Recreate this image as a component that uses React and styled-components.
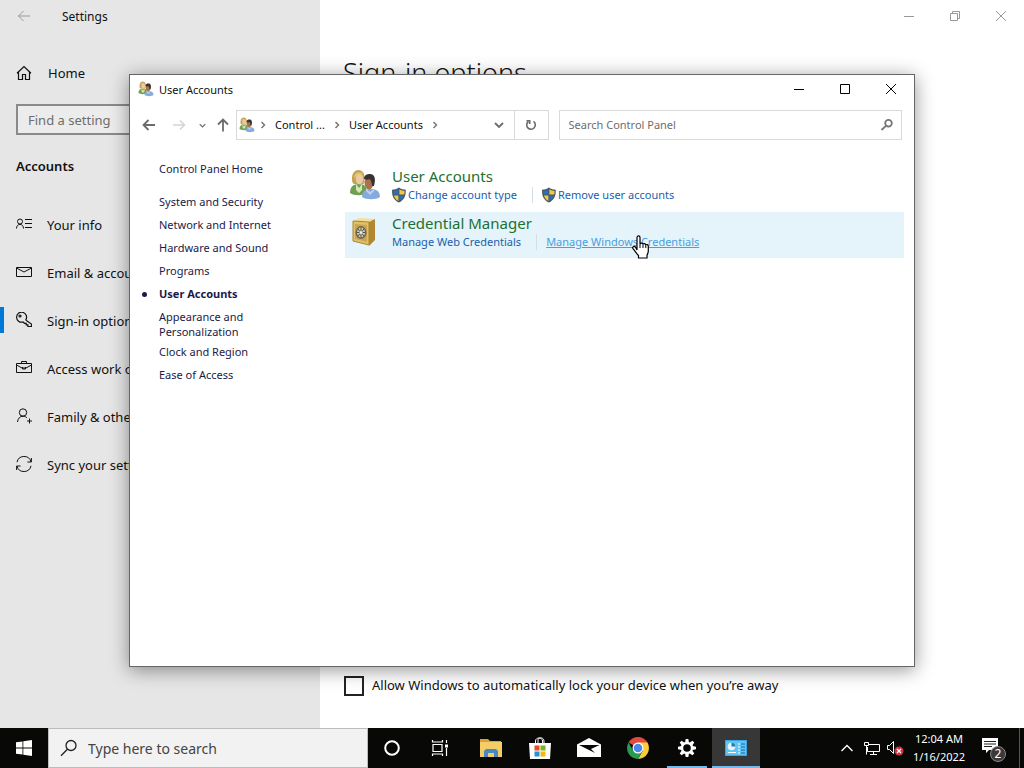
import React from "react";
import styled, { createGlobalStyle, css } from "styled-components";

const GlobalStyle = createGlobalStyle`
  *, *::before, *::after { box-sizing: border-box; }
  body {
    margin: 0;
    font-family: "Noto Sans", "Open Sans", sans-serif;
    font-size: 13px;
    color: #111;
    background: #fff;
  }
  button, input { font: inherit; color: inherit; }
  button { border: 0; padding: 0; background: none; }
  ul { list-style: none; margin: 0; padding: 0; }
  h1, h2, h3 { margin: 0; }
  a { text-decoration: none; color: inherit; }
  svg { display: block; flex: none; }
`;

const Screen = styled.div`
  min-height: 100vh;
  display: grid;
  grid-template-rows: 1fr auto;
`;

const Desktop = styled.div`
  position: relative;
  display: flex;
`;

/* Settings window */

const SettingsWindow = styled.section`
  flex: 1;
  display: flex;
  min-width: 0;
`;

const SettingsSidebar = styled.aside`
  width: 320px;
  flex: none;
  background: #e6e6e6;
`;

const SettingsTitle = styled.header`
  display: flex;
  align-items: center;
  height: 32px;
  font-size: 12px;
`;

const BackButton = styled.button`
  width: 48px;
  height: 32px;
  margin-right: 14px;
  display: grid;
  place-items: center;
  color: #9a9a9a;
`;

const HomeLink = styled.a`
  display: flex;
  align-items: center;
  gap: 16px;
  height: 48px;
  margin-top: 17px;
  padding-left: 16px;
`;

const SettingSearch = styled.input`
  display: block;
  width: 288px;
  height: 31px;
  margin: 7px 16px 0;
  padding: 0 10px;
  border: 2px solid #8a8a8a;
  border-radius: 0;
  background: #ececec;
  &::placeholder { color: #6e6e6e; opacity: 1; }
`;

const SidebarHeading = styled.h2`
  padding: 0 16px;
  margin: 15px 0 18px;
  font-size: 13px;
  line-height: 32px;
  font-weight: 600;
`;

const SettingsLink = styled.a`
  display: flex;
  align-items: center;
  gap: 15px;
  height: 48px;
  padding-left: 12px;
  border-left: 4px solid transparent;
  span { padding-top: 2px; }
  ${(p) => p.$active && css`
    border-image: linear-gradient(transparent 25%, #0078d7 25%, #0078d7 75%, transparent 75%) 1;
    border-image-width: 0 0 0 4px;
  `}
`;

const SettingsMain = styled.main`
  flex: 1;
  display: flex;
  flex-direction: column;
  justify-content: space-between;
  min-width: 0;
`;

const WindowControls = styled.div`
  display: flex;
  justify-content: flex-end;
  color: ${(p) => (p.$inactive ? "#999" : "#000")};
`;

const WindowButton = styled.button`
  width: 46px;
  height: ${(p) => p.$height || 28}px;
  display: grid;
  place-items: center;
`;

const PageTitle = styled.h1`
  padding: 21px 23px 0;
  font-size: 27px;
  line-height: 40px;
  font-weight: 300;
`;

const CheckLabel = styled.label`
  display: flex;
  align-items: center;
  gap: 8px;
  padding: 0 24px;
  margin-bottom: 32px;
  line-height: 18px;
  span { padding-bottom: 2px; }
`;

const Checkbox = styled.input`
  appearance: none;
  flex: none;
  width: 20px;
  height: 20px;
  margin: 0;
  border: 2px solid #222;
  background: #fff;
`;

/* Control Panel window */

const Dialog = styled.section`
  position: absolute;
  top: 74px;
  right: 109px;
  bottom: 61px;
  left: 129px;
  display: flex;
  flex-direction: column;
  border: 1px solid #666;
  background: #fff;
  box-shadow: 0 3px 18px rgba(0, 0, 0, 0.42);
`;

const TitleBar = styled.header`
  display: flex;
  align-items: center;
  height: 28px;
  padding-left: 8px;
  gap: 5px;
  font-size: 11px;
  ${WindowControls} { margin-left: auto; }
`;

const Toolbar = styled.div`
  display: flex;
  align-items: center;
  margin-top: 7px;
  padding: 0 12px 0 4px;
  font-size: 11px;
`;

const NavButton = styled.button`
  width: ${(p) => p.$width || 30}px;
  height: 30px;
  display: grid;
  place-items: center;
  color: ${(p) => (p.$disabled ? "#d4d4d4" : "#6b6b6b")};
`;

const AddressBar = styled.nav`
  flex: 311 1 0;
  display: flex;
  align-items: center;
  height: 30px;
  margin-right: 10px;
  border: 1px solid #d9d9d9;
  white-space: nowrap;
  color: #777;
  ${NavButton} { height: 28px; }
`;

const AddressIcon = styled.span`
  padding: 0 4px 0 2px;
`;

const Crumb = styled.a`
  padding: 0 8px 2px;
  color: #111;
`;

const RefreshButton = styled(NavButton)`
  border-left: 1px solid #d9d9d9;
`;

const Spacer = styled.span`
  flex: 1;
`;

const SearchBox = styled.label`
  flex: 326 1 0;
  display: flex;
  align-items: center;
  height: 30px;
  padding: 0 7px 0 9px;
  border: 1px solid #d9d9d9;
  color: #757575;
`;

const SearchInput = styled.input`
  flex: 1;
  min-width: 0;
  padding: 0 0 2px;
  border: 0;
  outline: 0;
  background: transparent;
  &::placeholder { color: #6d6d6d; opacity: 1; }
`;

const PanelBody = styled.div`
  flex: 1;
  display: flex;
  padding: 20px 10px 0 12px;
`;

const CategoryNav = styled.nav`
  width: 203px;
  flex: none;
  padding: 1px 72px 0 0;
  font-size: 11px;
  line-height: 15px;
  color: #1a1a4a;
`;

const CategoryItem = styled.li`
  display: flex;
  min-height: 18px;
  margin-bottom: ${(p) => (p.$home ? 15 : 5)}px;
  font-weight: ${(p) => (p.$current ? 700 : 400)};
  &::before {
    content: "";
    flex: none;
    width: 5px;
    height: 5px;
    margin: 6px 12px 0 0;
    border-radius: 50%;
    background: ${(p) => (p.$current ? "#1a1a4a" : "transparent")};
  }
`;

const ItemList = styled.ul`
  flex: 1;
  display: flex;
  flex-direction: column;
  gap: 1px;
  min-width: 0;
  padding-top: 5px;
`;

const PanelItem = styled.li`
  display: flex;
  height: 46px;
  padding: 1px 4px;
  gap: 11px;
  background: ${(p) => (p.$hover ? "#e5f3fb" : "transparent")};
`;

const ItemIcon = styled.span`
  padding-top: 3px;
`;

const ItemTitle = styled.h3`
  margin-bottom: 1px;
  font-size: 15px;
  line-height: 20px;
  font-weight: 400;
  color: #1c7030;
`;

const TaskRow = styled.div`
  display: flex;
  align-items: center;
  font-size: 11px;
  line-height: 16px;
`;

const TaskLink = styled.a`
  position: relative;
  display: flex;
  align-items: center;
  white-space: nowrap;
  color: ${(p) => (p.$hover ? "#4a9fdc" : "#1a5fac")};
  text-decoration: ${(p) => (p.$hover ? "underline" : "none")};
  & + & {
    margin-left: 15px;
    padding-left: 9px;
    border-left: 1px solid #d6dde2;
  }
`;

const Pointer = styled.svg`
  position: absolute;
  left: 95px;
  top: 1px;
`;

/* Taskbar */

const Taskbar = styled.footer`
  display: flex;
  height: 40px;
  background: #080807;
  color: #fff;
`;

const TaskButton = styled.button`
  width: 48px;
  height: 40px;
  flex: none;
  display: grid;
  place-items: center;
  background: ${(p) => (p.$active ? "#373737" : "transparent")};
  ${(p) => p.$running && css`
    background: linear-gradient(#76b9ed, #76b9ed) center bottom / ${p.$active ? 48 : 40}px 2px no-repeat,
      ${p.$active ? "#373737" : "transparent"};
  `}
`;

const TaskSearch = styled.label`
  display: flex;
  align-items: center;
  width: 320px;
  padding: 0 11px;
  gap: 10px;
  border: 1px solid #bcbcbc;
  background: #f2f2f2;
  color: #222;
  font-size: 14px;
`;

const TaskInput = styled(SearchInput)`
  padding: 0;
  &::placeholder { color: #444; }
`;

const PinnedApps = styled.div`
  display: flex;
  gap: 1px;
  margin-left: 3px;
`;

const Tray = styled.div`
  display: flex;
  margin-left: auto;
`;

const TrayButton = styled(TaskButton)`
  width: 24px;
`;

const Clock = styled.button`
  width: 64px;
  font-size: 11px;
  line-height: 18px;
  text-align: center;
  white-space: nowrap;
`;

const ShowDesktop = styled.button`
  width: 5px;
  border-left: 1px solid #555;
`;

/* Icons */

const Line = ({ size = 16, box = 16, w = 1, children, ...rest }) => (
  <svg width={size} height={size} viewBox={`0 0 ${box} ${box}`} fill="none" stroke="currentColor" strokeWidth={w} aria-hidden="true" {...rest}>
    {children}
  </svg>
);

const ArrowLeft = ({ size = 14, w = 1 }) => (
  <Line size={size} box={14} w={w}><path d="M13 7H1.5M6.5 2 1.5 7l5 5" /></Line>
);
const ArrowRight = () => <Line size={14} box={14} w={1.6}><path d="M1 7h11.5M8 2.5 12.5 7 8 11.5" /></Line>;
const ArrowUp = () => <Line size={14} box={14} w={1.8}><path d="M7 13.5V2M2 6.5l5-5 5 5" /></Line>;
const ChevronDown = ({ size = 10 }) => <Line size={size} box={10} w={1.8}><path d="m1 3 4 4 4-4" /></Line>;
const ChevronRight = () => <Line size={8} box={8} w={1.5}><path d="m2.5 1 3 3-3 3" /></Line>;
const Refresh = () => (
  <Line size={12} box={12} w={1.6}><path d="M8.5 2.4A4.3 4.3 0 1 1 3.4 2.5" /><path d="M1.5 1.8h3.2v3.2" /></Line>
);
const SearchGlass = () => (
  <Line size={14} box={14} w={1.8}><circle cx="8.5" cy="5.2" r="3.3" /><path d="M6.2 7.6 1.5 12" /></Line>
);

const Minimize = () => <Line size={10} box={10}><path d="M0 5.5h10" /></Line>;
const Maximize = () => <Line size={10} box={10}><path d="M.5.5h9v9h-9z" /></Line>;
const Restore = () => <Line size={10} box={10}><path d="M.5 2.5h7v7h-7zM2.5 2V.5h7v7H8" /></Line>;
const Close = () => <Line size={10} box={10}><path d="m0 0 10 10M10 0 0 10" /></Line>;

const HomeIcon = () => (
  <Line w={1.2}><path d="M1 8.3 8 1.6l7 6.7M2.5 7v7.5h4v-5h3v5h4V7" /></Line>
);
const InfoIcon = () => (
  <Line><circle cx="4" cy="5.5" r="2.5" /><path d="M.5 12.5c0-5.5 7-5.5 7 0M9 3.5h7M9 7.5h7M9 11.5h7" /></Line>
);
const MailIcon = () => (
  <Line><path d="M.5 3.5h15v9H.5zM.5 4l7.5 4 7.5-4" /></Line>
);
const KeyIcon = () => (
  <Line w={1.2}><path d="M9.600 8.200A5 5 0 1 0 7 10l1.500 1.300h1.700v1.600h1.700v1.600h3.600v-2.400L9.600 7.900" /><circle cx="4" cy="4" r="1" /></Line>
);
const CaseIcon = () => (
  <Line><path d="M.5 3.500h15v9H.5zM5.500 3V1.500h5V3M.5 5l5.500 3h4l5.500-3M6.500 7v2h3V7" /></Line>
);
const FamilyIcon = () => (
  <Line><circle cx="7" cy="4.500" r="3.700" /><path d="M1.500 14c.3-3.500 2.500-5.800 5.500-5.800 1.700 0 3 .6 4 1.800M13.500 10.500v5M11 13h5" /></Line>
);
const SyncIcon = () => (
  <Line><path d="M1 6.200A7.200 7.200 0 0 1 15 5.800M15 9.800a7.200 7.200 0 0 1-14 .4M15.400 2v4h-4M.6 14v-4h4" /></Line>
);

const PeopleIcon = ({ size }) => (
  <svg width={size} height={size} viewBox="0 0 32 32" aria-hidden="true">
    <path d="M1 24c0-6 3-9 9-9s8 3 8 9c-4 3-13 3-17 0z" fill="#6f9f55" />
    <path d="m7 15 3 4 3-4v6l-3 3-3-3z" fill="#d8e6b0" />
    <path d="M3 9c0-5 3-8 6.500-8s6 3 6 7c0 3 0 5-1 7H5c-2-1-2-3-2-6z" fill="#c2a352" />
    <ellipse cx="10.500" cy="10" rx="3.800" ry="5.300" fill="#ecc9a0" />
    <path d="M5 9c0-5 5-7 9-4-3 0-6 1-9 4z" fill="#e0c878" />
    <path d="M13 28c0-6 4-8 9-8s9 2 9 8c-4 3-14 3-18 0z" fill="#86aadb" />
    <path d="m17 20 4 3 4-3v2l-4 4-4-4z" fill="#b9d2f1" />
    <ellipse cx="20" cy="14" rx="4.500" ry="6.500" fill="#a9714c" />
    <path d="M15 10c0-4 3-5 6-5 5 0 6 5 4 12h-2c0-3-1-5-2-7-2 1-4 1-6 0z" fill="#3a3230" />
  </svg>
);

const SafeIcon = () => (
  <svg width="32" height="32" viewBox="0 0 32 32" aria-hidden="true">
    <path d="m4 5 6-3 16 1-6 3z" fill="#f2df98" />
    <path d="m20 6 6-3v21l-6 6z" fill="#b38731" />
    <path d="m4 5 16 1v23L4 25z" fill="#e2c06a" stroke="#a9842f" />
    <path d="m6 8 12 1v17L6 23z" fill="#cba64c" />
    <ellipse cx="12" cy="16.500" rx="5.500" ry="6.500" fill="#6c6655" />
    <ellipse cx="12" cy="16.500" rx="4" ry="5" fill="#cdc9ba" />
    <path d="M12 11.500v10M8 16.500h8M9 13l6 7M15 13l-6 7" stroke="#55513f" />
    <circle cx="12" cy="16.500" r="1.500" fill="#eee" />
  </svg>
);

const ShieldIcon = () => (
  <svg width="16" height="16" viewBox="0.6 0 16 16" aria-hidden="true">
    <path d="M7.500.5C5.500 2 3 2.700.7 2.700c-.4 6 1.500 10.300 6.800 12.800 5.300-2.500 7.200-6.800 6.800-12.800C12 2.700 9.500 2 7.500.5z" fill="#47566a" />
    <path d="M7 2.200C5.500 3.200 3.500 3.800 1.800 3.900c0 1.400.1 2.600.4 3.700H7z" fill="#2a6fb8" />
    <path d="M8 2.200c1.500 1 3.500 1.600 5.200 1.700 0 1.400-.1 2.600-.4 3.700H8z" fill="#f5c93f" />
    <path d="M7 8.400H2.500c.8 2.500 2.200 4.300 4.500 5.700z" fill="#f5c93f" />
    <path d="M8 8.400h4.500c-.8 2.500-2.200 4.300-4.500 5.700z" fill="#2a6fb8" />
  </svg>
);

const HandPointer = () => (
  <Pointer width="17" height="24" viewBox="0 0 17 24" aria-hidden="true">
    <path d="M5 15V2.500C5 .4 8 .4 8 2.500V9c.3-1.400 3-1.200 3 .4.500-1.300 2.700-.9 2.800.6.8-1 2.500-.4 2.500 1.200V16c0 2-.8 3-1.300 4.200V23H6.500v-2.500C5 19 3 16 1 13.600-.1 12 2 10.500 3.400 12z" fill="#fff" stroke="#000" strokeWidth="1.200" />
    <path d="M8 9v4M11 9.500V13M13.800 10.500V13" stroke="#000" />
  </Pointer>
);

const WindowsLogo = () => (
  <svg width="16" height="16" viewBox="0 0 16 16" fill="#fff" aria-hidden="true">
    <path d="M0 2.300 6.500 1.400v6.200H0zM7.300 1.300 16 0v7.600H7.300zM0 8.400h6.500v6.200L0 13.700zM7.300 8.400H16V16l-8.700-1.300z" />
  </svg>
);
const TaskGlass = () => (
  <Line size={18} box={18} w={1.3}><circle cx="11" cy="6.500" r="5" /><path d="M7.400 10.200 1 16.800" /></Line>
);
const CortanaIcon = () => <Line w={2}><circle cx="8" cy="8" r="6.800" /></Line>;
const TaskViewIcon = () => (
  <Line size={18} box={18} w={1.2}>
    <path d="M2 5.500h9v7H2zM1.500 1v2h10V1M1.500 17v-2h10v2M15.500 1v3M15.500 9v8" />
    <path d="M14 5.500h3v3h-3z" fill="currentColor" stroke="none" />
  </Line>
);
const FolderIcon = () => (
  <svg width="22" height="20" viewBox="0 0 22 20" aria-hidden="true">
    <path d="M0 1h8l2 2h11v4H0z" fill="#dfa032" />
    <path d="M0 4h22v15H0z" fill="#f5cd66" />
    <path d="M4 19v-6l2-2h10l2 2v6h-4v-4H8v4z" fill="#4a88c4" />
  </svg>
);
const StoreIcon = () => (
  <svg width="24" height="24" viewBox="0 0 24 24" aria-hidden="true">
    <path d="M7.500 8V5c0-4 7-4 7 0v3M10 7V4c0-3 6-3 6 1v2" fill="none" stroke="#fff" />
    <path d="M1 7h22l-1 16H2z" fill="#fff" />
    <path d="M6.500 9.500h5v5h-5z" fill="#e24f25" />
    <path d="M12.500 9.500h5v5h-5z" fill="#7cb518" />
    <path d="M6.500 15.500h5v5h-5z" fill="#2592d8" />
    <path d="M12.500 15.500h5v5h-5z" fill="#f5b715" />
  </svg>
);
const MailAppIcon = () => (
  <svg width="24" height="20" viewBox="0 0 24 20" aria-hidden="true">
    <path d="M0 6.500 12 0l12 6.500V19H0z" fill="#fff" />
    <path d="M2 7h20.500L14 11l4 4-6-3z" fill="#080807" />
  </svg>
);
const ChromeIcon = () => (
  <svg width="22" height="22" viewBox="0 0 22 22" aria-hidden="true">
    <path d="M11 11 1.500 5.500A11 11 0 0 1 20.500 5.500z" fill="#df4b3c" />
    <path d="M11 5.500h9.500A11 11 0 0 1 11 22l4.800-8.200z" fill="#fbcd3b" />
    <path d="M1.500 5.500A11 11 0 0 0 11 22l4.800-8.200-9.600 0z" fill="#299b50" />
    <circle cx="11" cy="11" r="5.500" fill="#fff" />
    <circle cx="11" cy="11" r="4.300" fill="#4c87ec" />
  </svg>
);
const GearIcon = () => (
  <svg width="20" height="20" viewBox="-10 -10 20 20" aria-hidden="true">
    <circle r="5" fill="none" stroke="#fff" strokeWidth="2.400" />
    {[0, 45, 90, 135, 180, 225, 270, 315].map((a) => (
      <path key={a} d="M-1.300-9h2.600l.7 3.500h-4z" fill="#fff" transform={`rotate(${a})`} />
    ))}
  </svg>
);
const ControlPanelIcon = () => (
  <svg width="22" height="16" viewBox="0 0 22 16" aria-hidden="true">
    <path d="M0 0h22v16H0z" fill="#3aa5e3" />
    <path d="M1 1h20v14H1z" fill="#62c4f5" />
    <circle cx="6.500" cy="6.500" r="3.800" fill="#e8f7ff" />
    <path d="M6.500 6.500V2.700a3.800 3.800 0 0 1 3.800 3.800z" fill="#1d78b8" />
    <path d="M3 12.500h8M13 4h2M13 7h2M13 10h2M13 13h2" stroke="#fff" />
    <path d="M16 4h4M16 7h4M16 10h4M16 13h4" stroke="#1668a8" />
  </svg>
);
const TrayChevron = () => <Line size={12} box={12} w={1.400}><path d="m.5 9 5.500-5.500L11.500 9" /></Line>;
const NetworkIcon = () => (
  <Line size={17} box={17}><path d="M6 4.500h10.500v7H4.500V7M1.500 2.500h4v3h-4zM3.500 6v8.500M10.500 12v2.500M7 14.500h7" /></Line>
);
const VolumeIcon = () => (
  <svg width="18" height="16" viewBox="0 0 18 16" aria-hidden="true">
    <path d="M1.500 5.500h2l4-4v12l-4-4h-2z" fill="none" stroke="#fff" />
    <circle cx="13" cy="11" r="4.500" fill="#cf3345" />
    <path d="m11 9 4 4M15 9l-4 4" stroke="#fff" strokeWidth="1.200" />
  </svg>
);
const ActionIcon = () => (
  <svg width="28" height="28" viewBox="0 0 28 28" aria-hidden="true">
    <path d="M1 4h16v12H8l-3 3v-3H1z" fill="#fff" />
    <path d="M3 7.500h12M3 10h12M3 12.500h8" stroke="#222" />
    <circle cx="17" cy="20" r="7.500" fill="#3a3a3a" stroke="#888" />
    <text x="17" y="24" fill="#fff" fontSize="12" textAnchor="middle">2</text>
  </svg>
);

const SETTINGS_LINKS = [
  ["Your info", InfoIcon],
  ["Email & accounts", MailIcon],
  ["Sign-in options", KeyIcon],
  ["Access work or school", CaseIcon],
  ["Family & other users", FamilyIcon],
  ["Sync your settings", SyncIcon],
];

const CATEGORIES = [
  "Control Panel Home",
  "System and Security",
  "Network and Internet",
  "Hardware and Sound",
  "Programs",
  "User Accounts",
  "Appearance and Personalization",
  "Clock and Region",
  "Ease of Access",
];

function Settings() {
  return (
    <SettingsWindow aria-label="Settings">
      <SettingsSidebar>
        <SettingsTitle>
          <BackButton aria-label="Back"><ArrowLeft /></BackButton>
          Settings
        </SettingsTitle>
        <HomeLink href="#home"><HomeIcon />Home</HomeLink>
        <SettingSearch type="text" aria-label="Find a setting" placeholder="Find a setting" />
        <SidebarHeading>Accounts</SidebarHeading>
        <nav>
          {SETTINGS_LINKS.map(([label, Icon]) => (
            <SettingsLink key={label} href="#settings" $active={label === "Sign-in options"}>
              <Icon /><span>{label}</span>
            </SettingsLink>
          ))}
        </nav>
      </SettingsSidebar>
      <SettingsMain>
        <div>
          <WindowControls $inactive>
            <WindowButton $height={32} aria-label="Minimize"><Minimize /></WindowButton>
            <WindowButton $height={32} aria-label="Restore"><Restore /></WindowButton>
            <WindowButton $height={32} aria-label="Close"><Close /></WindowButton>
          </WindowControls>
          <PageTitle>Sign-in options</PageTitle>
        </div>
        <CheckLabel>
          <Checkbox type="checkbox" />
          <span>Allow Windows to automatically lock your device when you’re away</span>
        </CheckLabel>
      </SettingsMain>
    </SettingsWindow>
  );
}

function ControlPanel() {
  return (
    <Dialog aria-label="User Accounts">
      <TitleBar>
        <PeopleIcon size={16} />
        User Accounts
        <WindowControls>
          <WindowButton aria-label="Minimize"><Minimize /></WindowButton>
          <WindowButton aria-label="Maximize"><Maximize /></WindowButton>
          <WindowButton aria-label="Close"><Close /></WindowButton>
        </WindowControls>
      </TitleBar>
      <Toolbar>
        <NavButton aria-label="Back"><ArrowLeft w={1.8} /></NavButton>
        <NavButton aria-label="Forward" $disabled><ArrowRight /></NavButton>
        <NavButton aria-label="Recent" $width={16}><ChevronDown size={7} /></NavButton>
        <NavButton aria-label="Up" $width={26}><ArrowUp /></NavButton>
        <AddressBar aria-label="Address">
          <AddressIcon><PeopleIcon size={16} /></AddressIcon>
          <ChevronRight />
          <Crumb href="#control">Control ...</Crumb>
          <ChevronRight />
          <Crumb href="#accounts">User Accounts</Crumb>
          <ChevronRight />
          <Spacer />
          <NavButton aria-label="Previous locations"><ChevronDown /></NavButton>
          <RefreshButton aria-label="Refresh" $width={34}><Refresh /></RefreshButton>
        </AddressBar>
        <SearchBox>
          <SearchInput type="text" aria-label="Search Control Panel" placeholder="Search Control Panel" />
          <SearchGlass />
        </SearchBox>
      </Toolbar>
      <PanelBody>
        <CategoryNav>
          <ul>
            {CATEGORIES.map((name, i) => (
              <CategoryItem key={name} $home={i === 0} $current={name === "User Accounts"}>
                <a href="#category">{name}</a>
              </CategoryItem>
            ))}
          </ul>
        </CategoryNav>
        <ItemList>
          <PanelItem>
            <ItemIcon><PeopleIcon size={32} /></ItemIcon>
            <div>
              <ItemTitle><a href="#accounts">User Accounts</a></ItemTitle>
              <TaskRow>
                <TaskLink href="#type"><ShieldIcon />Change account type</TaskLink>
                <TaskLink href="#remove"><ShieldIcon />Remove user accounts</TaskLink>
              </TaskRow>
            </div>
          </PanelItem>
          <PanelItem $hover>
            <ItemIcon><SafeIcon /></ItemIcon>
            <div>
              <ItemTitle><a href="#credentials">Credential Manager</a></ItemTitle>
              <TaskRow>
                <TaskLink href="#web">Manage Web Credentials</TaskLink>
                <TaskLink href="#windows" $hover>Manage Windows Credentials<HandPointer /></TaskLink>
              </TaskRow>
            </div>
          </PanelItem>
        </ItemList>
      </PanelBody>
    </Dialog>
  );
}

export default function App() {
  return (
    <Screen>
      <GlobalStyle />
      <Desktop>
        <Settings />
        <ControlPanel />
      </Desktop>
      <Taskbar>
        <TaskButton aria-label="Start"><WindowsLogo /></TaskButton>
        <TaskSearch>
          <TaskGlass />
          <TaskInput type="text" aria-label="Type here to search" placeholder="Type here to search" />
        </TaskSearch>
        <TaskButton aria-label="Cortana"><CortanaIcon /></TaskButton>
        <TaskButton aria-label="Task View"><TaskViewIcon /></TaskButton>
        <PinnedApps>
          <TaskButton aria-label="File Explorer"><FolderIcon /></TaskButton>
          <TaskButton aria-label="Microsoft Store"><StoreIcon /></TaskButton>
          <TaskButton aria-label="Mail"><MailAppIcon /></TaskButton>
          <TaskButton aria-label="Chrome"><ChromeIcon /></TaskButton>
          <TaskButton aria-label="Settings" $running><GearIcon /></TaskButton>
          <TaskButton aria-label="Control Panel" $running $active><ControlPanelIcon /></TaskButton>
        </PinnedApps>
        <Tray>
          <TrayButton aria-label="Hidden icons"><TrayChevron /></TrayButton>
          <TrayButton aria-label="Network"><NetworkIcon /></TrayButton>
          <TrayButton aria-label="Volume"><VolumeIcon /></TrayButton>
          <Clock>12:04 AM<br />1/16/2022</Clock>
          <TaskButton aria-label="Notifications"><ActionIcon /></TaskButton>
          <ShowDesktop aria-label="Show desktop" />
        </Tray>
      </Taskbar>
    </Screen>
  );
}
